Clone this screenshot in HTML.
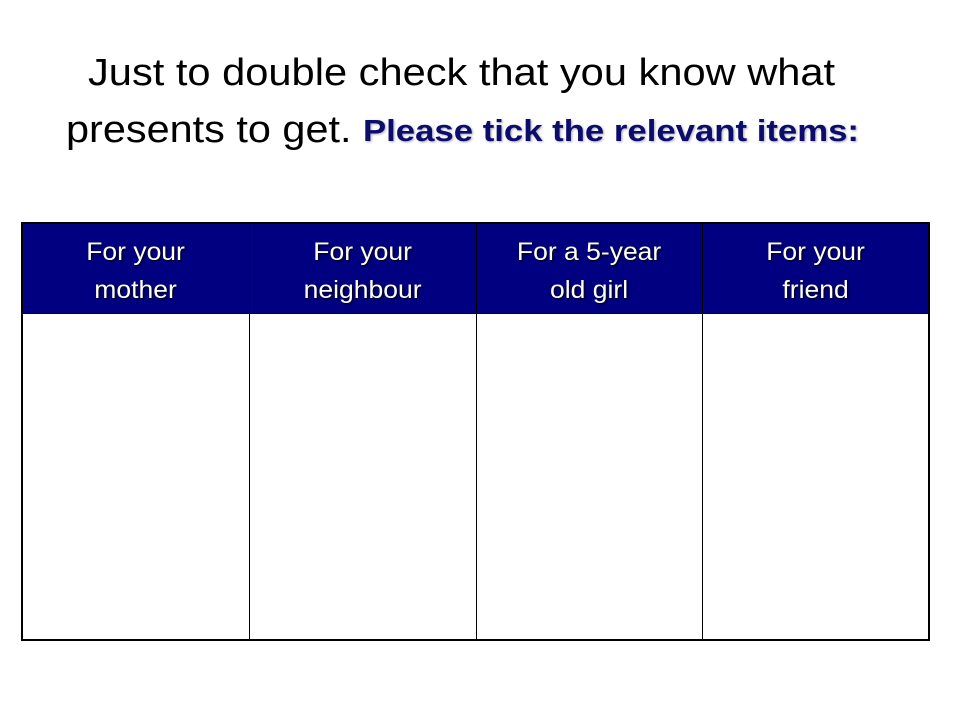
<!DOCTYPE html>
<html><head><style>
body{margin:0;width:960px;height:720px;background:#fff;position:relative;overflow:hidden;font-family:"Liberation Sans",sans-serif;}
.l{position:absolute;white-space:nowrap;transform-origin:0 0;color:#000;}
.b{font-weight:bold;color:#0c0c6a;text-shadow:1px 1px 2px #aab;}
table{position:absolute;left:21px;top:222px;width:909px;height:419px;border-collapse:collapse;table-layout:fixed;border:2px solid #000;}
td{border:1px solid #000;padding:0;}
th{background:#000080;color:#fff;font-weight:normal;font-size:25px;line-height:38px;height:80px;padding:9px 0 0 0;vertical-align:top;border:1px solid #000;text-shadow:1px 1px 2px #000;}
th span{display:inline-block;transform:scaleX(1.06);}
</style></head><body>
<div class="l" style="left:88px;top:52px;font-size:38px;transform:scaleX(1.095)">Just to double check that you know what</div>
<div class="l" style="left:66px;top:109px;font-size:38px;transform:scaleX(1.09)">presents to get.</div>
<div class="l b" style="left:363px;top:113px;font-size:31px;transform:scaleX(1.12)">Please tick the relevant items:</div>
<table>
<colgroup><col style="width:227px"><col style="width:227px"><col style="width:226px"><col></colgroup>
<tr><th><span>For your<br>mother</span></th><th><span>For your<br>neighbour</span></th><th><span>For a 5-year<br>old girl</span></th><th><span>For your<br>friend</span></th></tr>
<tr><td></td><td></td><td></td><td></td></tr>
</table>
</body></html>
